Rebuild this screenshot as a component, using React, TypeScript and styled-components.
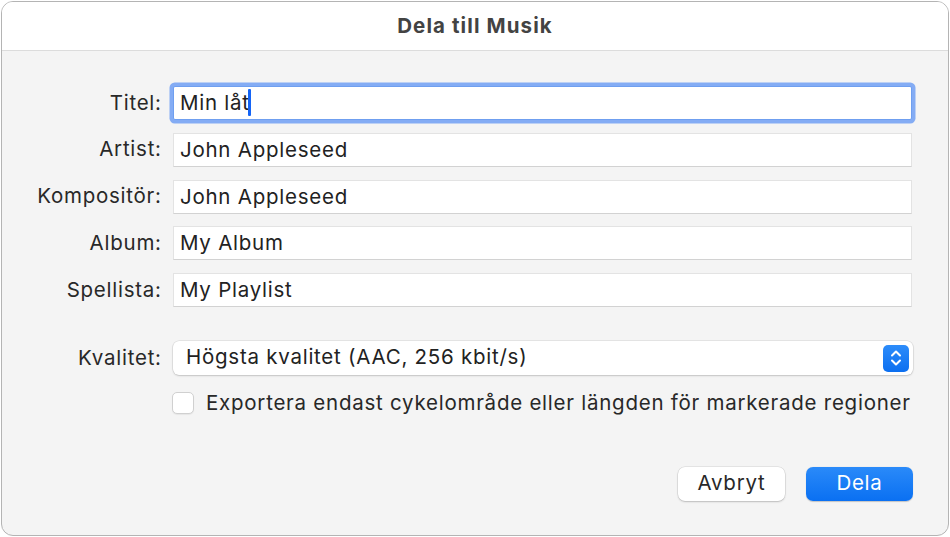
import styled, { createGlobalStyle } from "styled-components";

const GlobalStyle = createGlobalStyle`
    html, body {
        margin: 0;
        padding: 0;
        background: #ffffff;
    }
    body {
        font-family: Inter, "Liberation Sans", Arial, sans-serif;
        letter-spacing: 0.75px;
        -webkit-font-smoothing: antialiased;
    }
`;

const Page = styled.div`
    width: 950px;
    height: 537px;
    padding: 1px 1px 1px 1px;
    box-sizing: border-box;
`;

const Window = styled.div`
    width: 948px;
    height: 535px;
    box-sizing: border-box;
    border: 1px solid #b4b4b4;
    border-radius: 12px;
    overflow: hidden;
    display: flex;
    flex-direction: column;
    background: #f4f4f4;
`;

const TitleBar = styled.div`
    height: 49px;
    flex: none;
    display: flex;
    align-items: center;
    justify-content: center;
    padding-bottom: 1px;
    box-sizing: border-box;
    background: #ffffff;
    border-bottom: 1px solid #dcdcdc;
    font-size: 20.5px;
    font-weight: 700;
    letter-spacing: 1.1px;
    color: #434343;
`;

const Body = styled.div`
    flex: 1;
    display: flex;
    flex-direction: column;
    padding: 35px 35px 0 0;
`;

const Form = styled.div<{ top?: number }>`
    display: grid;
    grid-template-columns: 159px 1fr;
    column-gap: 12px;
    row-gap: 12.75px;
    align-items: center;
    margin-top: ${(p) => p.top ?? 0}px;
`;

const Label = styled.label`
    text-align: right;
    font-size: 20.5px;
    color: #282828;
    white-space: nowrap;
    margin-right: -0.75px;
    padding-bottom: 2px;
`;

const Field = styled.div<{ focused?: boolean }>`
    height: 34px;
    box-sizing: border-box;
    display: flex;
    align-items: center;
    padding: 0 0 1px 6px;
    margin-right: 1px;
    background: #ffffff;
    font-size: 20.5px;
    color: #222222;
    border: 1px solid ${(p) => (p.focused ? "#6f9ff0" : "#e3e3e3")};
    border-bottom-color: ${(p) => (p.focused ? "#6f9ff0" : "#d2d2d2")};
    box-shadow: ${(p) =>
        p.focused ? "0 0 0 3.5px rgba(120, 164, 244, 0.9)" : "none"};
    border-radius: ${(p) => (p.focused ? "2px" : "0")};
`;

const Caret = styled.span`
    display: inline-block;
    width: 3px;
    height: 27px;
    margin-left: -1.5px;
    background: #1464f6;
    border-radius: 1px;
`;

const Popup = styled.div`
    height: 34px;
    box-sizing: border-box;
    display: flex;
    align-items: center;
    justify-content: space-between;
    padding: 0 4px 0 13px;
    background: #ffffff;
    border-radius: 6px;
    font-size: 20.5px;
    color: #222222;
    box-shadow: 0 0 0 0.5px rgba(0, 0, 0, 0.12), 0 1px 2px rgba(0, 0, 0, 0.15);
`;

const PopupText = styled.span`
    padding-bottom: 3px;
`;

const Stepper = styled.div`
    width: 26px;
    height: 27px;
    border-radius: 5px;
    background: linear-gradient(#2d8cfa, #0c6ff0);
    display: flex;
    align-items: center;
    justify-content: center;
`;

const CheckRow = styled.div`
    grid-column: 2;
    display: flex;
    align-items: center;
    gap: 12px;
    margin-top: 2px;
    font-size: 20.5px;
    color: #282828;
    white-space: nowrap;
`;

const CheckText = styled.span`
    padding-bottom: 2px;
`;

const CheckBox = styled.span`
    width: 22px;
    height: 22px;
    margin-left: -1px;
    box-sizing: border-box;
    border-radius: 5px;
    background: #ffffff;
    border: 1px solid #d0d0d0;
    box-shadow: 0 1px 1px rgba(0, 0, 0, 0.06);
`;

const Buttons = styled.div`
    margin-top: auto;
    margin-bottom: 34px;
    display: flex;
    justify-content: flex-end;
    gap: 21px;
`;

const Button = styled.button<{ primary?: boolean }>`
    width: 107px;
    height: 34px;
    border: none;
    border-radius: 7px;
    font-family: inherit;
    letter-spacing: inherit;
    font-size: 20.5px;
    color: ${(p) => (p.primary ? "#ffffff" : "#282828")};
    background: ${(p) =>
        p.primary ? "linear-gradient(#2a8af9, #0a70f2)" : "#ffffff"};
    box-shadow: ${(p) =>
        p.primary
            ? "0 0.5px 1px rgba(0, 0, 0, 0.2)"
            : "0 0 0 0.5px rgba(0, 0, 0, 0.12), 0 1px 2px rgba(0, 0, 0, 0.18)"};
    padding: 0 0 3px 0;
`;

const fields = [
    { label: "Artist:", value: "John Appleseed" },
    { label: "Kompositör:", value: "John Appleseed" },
    { label: "Album:", value: "My Album" },
    { label: "Spellista:", value: "My Playlist" },
];

const App = () => {
    return (
        <>
            <GlobalStyle />
            <Page>
                <Window>
                    <TitleBar>Dela till Musik</TitleBar>
                    <Body>
                        <Form>
                            <Label>Titel:</Label>
                            <Field focused>
                                Min låt
                                <Caret />
                            </Field>
                            {fields.map((f) => (
                                <>
                                    <Label key={f.label}>{f.label}</Label>
                                    <Field key={f.label + "v"}>{f.value}</Field>
                                </>
                            ))}
                        </Form>
                        <Form top={34}>
                            <Label>Kvalitet:</Label>
                            <Popup>
                                <PopupText>Högsta kvalitet (AAC, 256 kbit/s)</PopupText>
                                <Stepper>
                                    <svg width="14" height="20" viewBox="0 0 14 20">
                                        <path
                                            d="M3 7.5 L7 3.5 L11 7.5 M3 12.5 L7 16.5 L11 12.5"
                                            fill="none"
                                            stroke="#ffffff"
                                            strokeWidth="2"
                                            strokeLinecap="round"
                                            strokeLinejoin="round"
                                        />
                                    </svg>
                                </Stepper>
                            </Popup>
                            <CheckRow>
                                <CheckBox />
                                <CheckText>
                                    Exportera endast cykelområde eller längden för markerade regioner
                                </CheckText>
                            </CheckRow>
                        </Form>
                        <Buttons>
                            <Button>Avbryt</Button>
                            <Button primary>Dela</Button>
                        </Buttons>
                    </Body>
                </Window>
            </Page>
        </>
    );
};

export default App;
